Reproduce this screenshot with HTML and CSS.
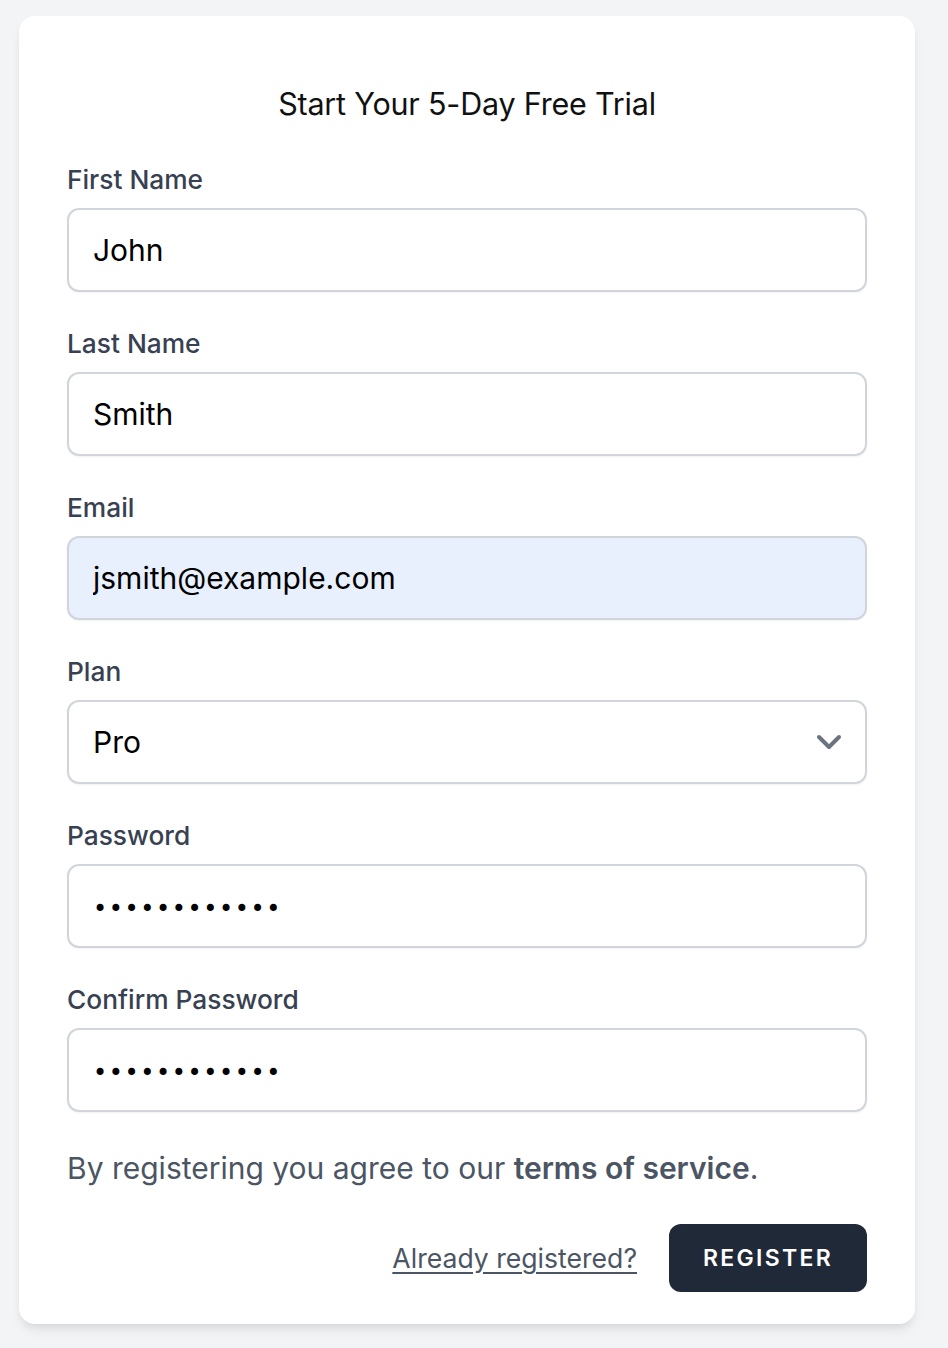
FILE: index.html
```html
<!DOCTYPE html>
<html lang="en">
<head>
<meta charset="utf-8">
<title>Register</title>
<link rel="stylesheet" href="styles.css">
</head>
<body>
<div class="card">
  <h1 class="title">Start Your 5-Day Free Trial</h1>
  <form class="form">
    <div class="field">
      <label class="label" for="first">First Name</label>
      <input class="input" id="first" type="text" value="John">
    </div>
    <div class="field">
      <label class="label" for="last">Last Name</label>
      <input class="input" id="last" type="text" value="Smith">
    </div>
    <div class="field">
      <label class="label" for="email">Email</label>
      <input class="input input-autofill" id="email" type="email" value="jsmith@example.com">
    </div>
    <div class="field">
      <label class="label" for="plan">Plan</label>
      <div class="input select" id="plan">
        <span>Pro</span>
        <svg class="chev" viewBox="0 0 20 20" width="50" height="50" aria-hidden="true"><path d="M6 8l4 4 4-4" fill="none" stroke="#6b7280" stroke-width="1.6" stroke-linecap="round" stroke-linejoin="round"/></svg>
      </div>
    </div>
    <div class="field">
      <label class="label" for="pw">Password</label>
      <div class="input dots" id="pw">••••••••••••</div>
    </div>
    <div class="field">
      <label class="label" for="pw2">Confirm Password</label>
      <div class="input dots" id="pw2">••••••••••••</div>
    </div>
    <p class="terms">By registering you agree to our <strong>terms of service</strong>.</p>
    <div class="actions">
      <a class="link" href="#">Already registered?</a>
      <button class="btn" type="button">Register</button>
    </div>
  </form>
</div>
</body>
</html>
```

FILE: styles.css
```css
* { box-sizing: border-box; }
html, body { margin: 0; padding: 0; }
body {
  background: #f3f4f6;
  font-family: Inter, "Open Sans", "Liberation Sans", sans-serif;
  padding: 16px 0 24px 19px;
}
.card {
  width: 896px;
  background: #fff;
  border-radius: 16px;
  box-shadow: 0 8px 12px -2px rgba(0,0,0,0.08), 0 4px 8px -4px rgba(0,0,0,0.08);
  padding: 32px 48px 32px;
}
.title {
  margin: 0;
  padding: 32px 0 32px;
  font-size: 30.5px;
  line-height: 48px;
  font-weight: 400;
  color: #111;
  text-align: center;
  letter-spacing: -0.2px;
}
.form { display: flex; flex-direction: column; gap: 32px; }
.field { display: flex; flex-direction: column; gap: 8px; }
.label {
  font-size: 26.3px;
  line-height: 40px;
  font-weight: 500;
  color: #374151;
}
.input {
  height: 84px;
  border: 2px solid #d1d5db;
  border-radius: 12px;
  box-shadow: 0 1px 2px rgba(0,0,0,0.05);
  padding: 0 24px;
  font-family: inherit;
  font-size: 30px;
  color: #000;
  background: #fff;
  outline: none;
  width: 100%;
}
.input-autofill { background: #e8f0fe; }
.select {
  display: flex;
  align-items: center;
  justify-content: space-between;
  padding-right: 11px;
}
.chev { display: block; }
.dots {
  display: flex;
  align-items: center;
  font-family: "DejaVu Sans", sans-serif;
  font-size: 24px;
  letter-spacing: 1.6px;
  padding-left: 24px;
  padding-top: 5px;
}
.terms {
  margin: 0;
  font-size: 30px;
  line-height: 48px;
  color: #4b5563;
}
.terms strong { font-weight: 600; }
.actions {
  display: flex;
  justify-content: flex-end;
  align-items: center;
  gap: 32px;
}
.link {
  font-size: 26.6px;
  color: #4b5563;
  text-decoration: underline;
  text-underline-offset: 4px;
}
.btn {
  height: 68px;
  padding: 0 32px;
  background: #1f2937;
  color: #fff;
  border: 2px solid transparent;
  border-radius: 12px;
  font-family: inherit;
  font-size: 23px;
  font-weight: 600;
  text-transform: uppercase;
  letter-spacing: 0.1em;
}
```
